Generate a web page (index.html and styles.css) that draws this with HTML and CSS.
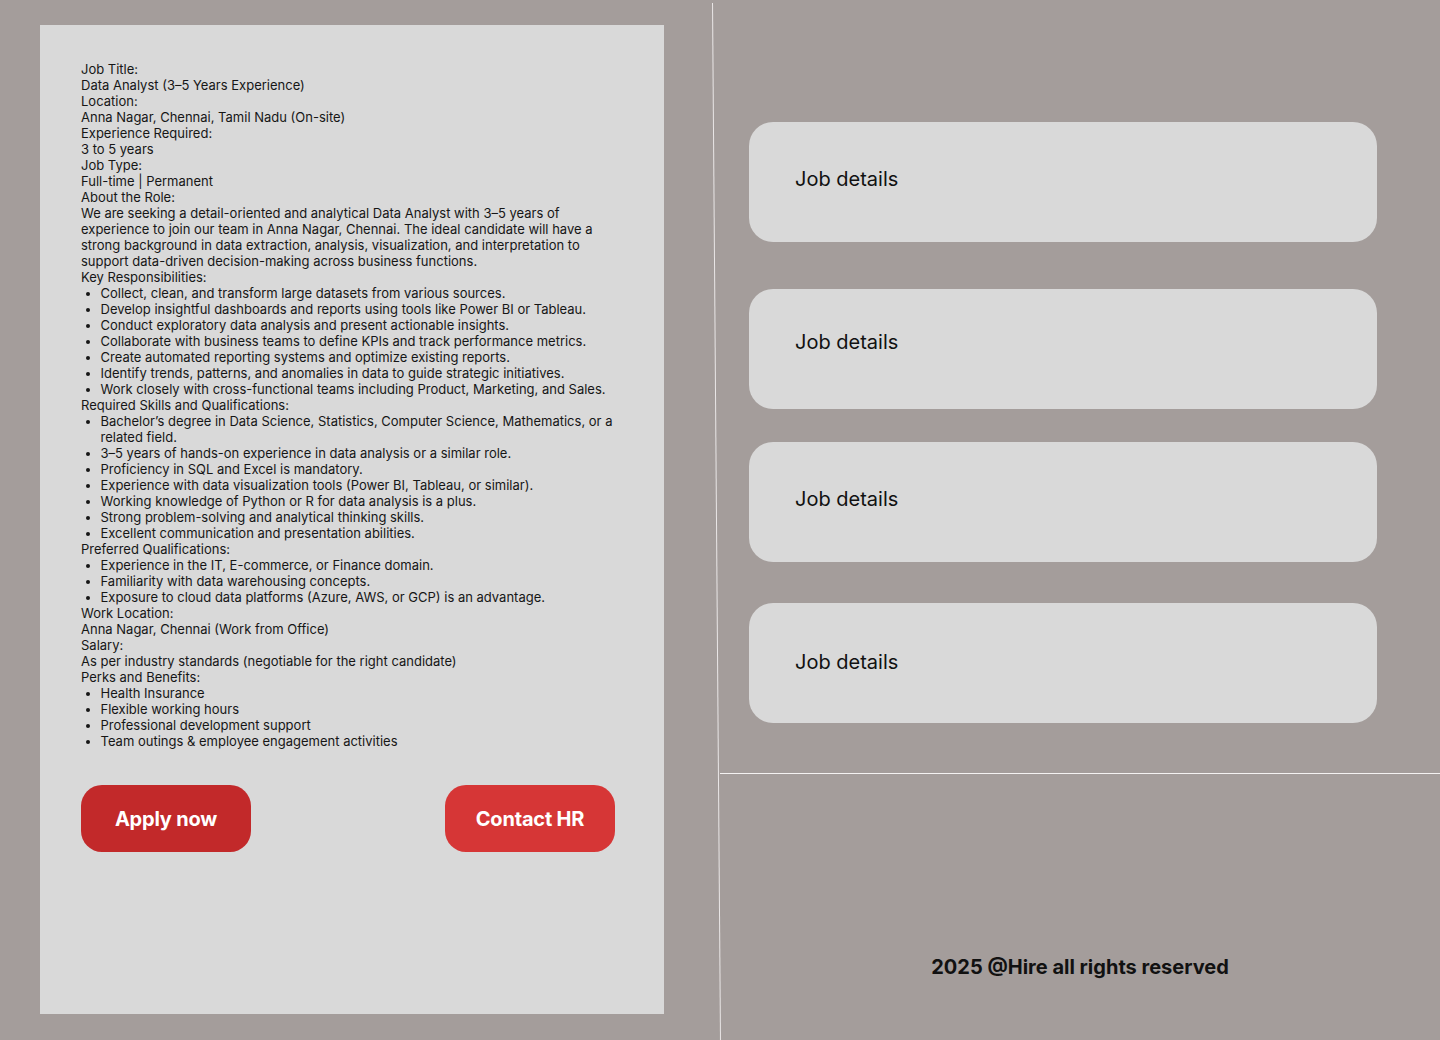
FILE: index.html
```html
<!DOCTYPE html>
<html lang="en">
<head>
<meta charset="utf-8">
<title>Job details</title>
<link rel="stylesheet" href="styles.css">
</head>
<body>
<div class="page">
  <div class="left-col">
    <section class="panel">
      <div class="desc">
        <p>Job Title:</p>
        <p>Data Analyst (3–5 Years Experience)</p>
        <p>Location:</p>
        <p>Anna Nagar, Chennai, Tamil Nadu (On-site)</p>
        <p>Experience Required:</p>
        <p>3 to 5 years</p>
        <p>Job Type:</p>
        <p>Full-time | Permanent</p>
        <p>About the Role:</p>
        <p>We are seeking a detail-oriented and analytical Data Analyst with 3–5 years of experience to join our team in Anna Nagar, Chennai. The ideal candidate will have a strong background in data extraction, analysis, visualization, and interpretation to support data-driven decision-making across business functions.</p>
        <p>Key Responsibilities:</p>
        <ul>
          <li>Collect, clean, and transform large datasets from various sources.</li>
          <li>Develop insightful dashboards and reports using tools like Power BI or Tableau.</li>
          <li>Conduct exploratory data analysis and present actionable insights.</li>
          <li>Collaborate with business teams to define KPIs and track performance metrics.</li>
          <li>Create automated reporting systems and optimize existing reports.</li>
          <li>Identify trends, patterns, and anomalies in data to guide strategic initiatives.</li>
          <li>Work closely with cross-functional teams including Product, Marketing, and Sales.</li>
        </ul>
        <p>Required Skills and Qualifications:</p>
        <ul>
          <li>Bachelor’s degree in Data Science, Statistics, Computer Science, Mathematics, or a related field.</li>
          <li>3–5 years of hands-on experience in data analysis or a similar role.</li>
          <li>Proficiency in SQL and Excel is mandatory.</li>
          <li>Experience with data visualization tools (Power BI, Tableau, or similar).</li>
          <li>Working knowledge of Python or R for data analysis is a plus.</li>
          <li>Strong problem-solving and analytical thinking skills.</li>
          <li>Excellent communication and presentation abilities.</li>
        </ul>
        <p>Preferred Qualifications:</p>
        <ul>
          <li>Experience in the IT, E-commerce, or Finance domain.</li>
          <li>Familiarity with data warehousing concepts.</li>
          <li>Exposure to cloud data platforms (Azure, AWS, or GCP) is an advantage.</li>
        </ul>
        <p>Work Location:</p>
        <p>Anna Nagar, Chennai (Work from Office)</p>
        <p>Salary:</p>
        <p>As per industry standards (negotiable for the right candidate)</p>
        <p>Perks and Benefits:</p>
        <ul>
          <li>Health Insurance</li>
          <li>Flexible working hours</li>
          <li>Professional development support</li>
          <li>Team outings &amp; employee engagement activities</li>
        </ul>
      </div>
      <div class="actions">
        <button class="btn btn-apply">Apply now</button>
        <button class="btn btn-contact">Contact HR</button>
      </div>
    </section>
  </div>
  <div class="divider"></div>
  <div class="right-col">
    <div class="cards">
      <div class="card card-1">Job details</div>
      <div class="card card-2">Job details</div>
      <div class="card card-3">Job details</div>
      <div class="card card-4">Job details</div>
    </div>
    <div class="hline"></div>
    <footer class="footer">2025 @Hire all rights reserved</footer>
  </div>
</div>
</body>
</html>
```

FILE: styles.css
```css
* { box-sizing: border-box; }
html, body { margin: 0; padding: 0; }
body {
  background: #a49d9b;
  font-family: Inter, "Liberation Sans", sans-serif;
  color: #111;
  width: 1440px;
  height: 1040px;
  overflow: hidden;
}
.page {
  display: flex;
  height: 1040px;
}
.left-col {
  width: 716px;
  flex: none;
  padding: 25px 0 0 40px;
}
.panel {
  width: 624px;
  height: 989px;
  background: #d9d9d9;
  padding: 36px 41px 0 41px;
}
.desc {
  font-size: 13px;
  line-height: 16px;
  color: #161616;
}
.desc p { margin: 0; }
.desc ul {
  margin: 0;
  padding-left: 19.5px;
}
.actions {
  display: flex;
  gap: 194px;
  margin-top: 36px;
}
.btn {
  width: 170px;
  height: 67px;
  border: none;
  border-radius: 21px;
  color: #fff;
  font-family: Inter, "Liberation Sans", sans-serif;
  font-size: 20px;
  font-weight: 700;
  letter-spacing: -0.2px;
  padding: 0;
}
.btn-apply { background: #c2292a; }
.btn-contact { background: #d63636; }
.divider {
  width: 1px;
  height: 1037px;
  margin-top: 3px;
  background: #e9e6e6;
  flex: none;
  transform: rotate(-0.44deg);
}
.right-col {
  flex: 1;
  margin-left: 3px;
  display: flex;
  flex-direction: column;
}
.cards {
  height: 773px;
  padding: 122px 0 0 29px;
}
.card {
  width: 628px;
  height: 120px;
  background: #d9d9d9;
  border-radius: 24px;
  padding-left: 46px;
  font-size: 20px;
  line-height: 24px;
  color: #111;
}
.card-1 { padding-top: 45px; }
.card-2 { margin-top: 47px; padding-top: 41px; }
.card-3 { margin-top: 33px; padding-top: 45px; }
.card-4 { margin-top: 41px; padding-top: 47px; }
.hline {
  height: 1px;
  background: #f4f2f2;
}
.footer {
  text-align: center;
  padding-top: 181px;
  font-size: 20px;
  line-height: 24px;
  font-weight: 700;
  color: #111;
}
```
